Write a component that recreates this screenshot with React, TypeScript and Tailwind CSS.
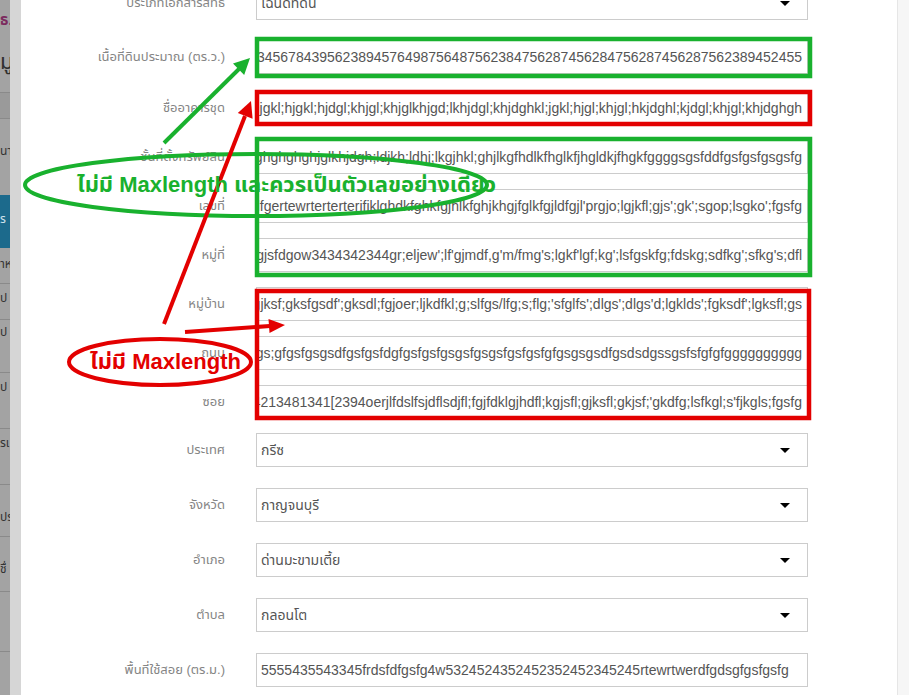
import React from "react";

type Row = {
  label: string;
  value: string;
  select?: boolean;
  overflow?: boolean;
  gap: string;
};

const rows: Row[] = [
  { label: "ประเภทเอกสารสิทธิ", value: "โฉนดที่ดิน", select: true, gap: "mt-0" },
  {
    label: "เนื้อที่ดินประมาณ (ตร.ว.)",
    value: "123456784395623894576498756487562384756287456284756287456287562389452455",
    overflow: true,
    gap: "mt-[20px]",
  },
  {
    label: "ชื่ออาคารชุด",
    value: "hjgkl;hjgkl;hjdgl;khjgl;khjglkhjgd;lkhjdgl;khjdghkl;jgkl;hjgl;khjgl;hkjdghl;kjdgl;khjgl;khjdghgh",
    overflow: true,
    gap: "mt-[17px]",
  },
  {
    label: "ชั้นที่ตั้งทรัพย์สิน",
    value: "ghghghghjglkhjdgh;ldjkh;ldhj;lkgjhkl;ghjlkgfhdlkfhglkfjhgldkjfhgkfggggsgsfddfgsfgsfgsgsfg",
    overflow: true,
    gap: "mt-[15px]",
  },
  {
    label: "เลขที่",
    value: "dfgertewrterterterifjklghdkfghkfgjhlkfghjkhgjfglkfgjldfgjl'prgjo;lgjkfl;gjs';gk';sgop;lsgko';fgsfg",
    overflow: true,
    gap: "mt-[15px]",
  },
  {
    label: "หมู่ที่",
    value: "sgjsfdgow3434342344gr;eljew';lf'gjmdf,g'm/fmg's;lgkf'lgf;kg';lsfgskfg;fdskg;sdfkg';sfkg's;dfl",
    overflow: true,
    gap: "mt-[15px]",
  },
  {
    label: "หมู่บ้าน",
    value: "gjksf;gksfgsdf';gksdl;fgjoer;ljkdfkl;g;slfgs/lfg;s;flg;'sfglfs';dlgs';dlgs'd;lgklds';fgksdf';lgksfl;gs",
    overflow: true,
    gap: "mt-[15px]",
  },
  {
    label: "ถนน",
    value: "gsfgsfgsfgs;gfgsfgsgsdfgsfgsfdgfgsfgsfgsgsfgsgsfgsfgsfgfgsgsgsdfgsdsdgssgsfsfgfgfgggggggggg",
    overflow: true,
    gap: "mt-[15px]",
  },
  {
    label: "ซอย",
    value: "4213481341[2394oerjlfdslfsjdflsdjfl;fgjfdklgjhdfl;kgjsfl;gjksfl;gkjsf;'gkdfg;lsfkgl;s'fjkgls;fgsfg",
    overflow: true,
    gap: "mt-[15px]",
  },
  { label: "ประเทศ", value: "กรีซ", select: true, gap: "mt-[14px]" },
  { label: "จังหวัด", value: "กาญจนบุรี", select: true, gap: "mt-[21px]" },
  { label: "อำเภอ", value: "ด่านมะขามเตี้ย", select: true, gap: "mt-[21px]" },
  { label: "ตำบล", value: "กลอนโต", select: true, gap: "mt-[21px]" },
  {
    label: "พื้นที่ใช้สอย (ตร.ม.)",
    value: "5555435543345frdsfdfgsfg4w5324524352452352452345245rtewrtwerdfgdsgfgsfgsfg",
    gap: "mt-[21px]",
  },
];

/* behind the modal: bits of the page that peek out on the left */
const backdrop = [
  { h: "h-[45px]", text: "ธ.", cls: "text-[#7b2a5e] font-bold text-[15px] pt-[12px]" },
  { h: "h-[48px]", text: "มู", cls: "text-[#2f2f2f] text-[22px] pt-[6px] border-b border-[#8a8a8a]" },
  { h: "h-[26px]", text: "", cls: "bg-[#9a9a9a] border-b border-[#8a8a8a]" },
  { h: "h-[76px]", text: "นา", cls: "text-[#333] text-[12px] pt-[26px]" },
  { h: "h-[53px]", text: "ร", cls: "bg-[#1c6a8c] text-[#cfe3ec] text-[12px] pt-[18px]" },
  { h: "h-[36px]", text: "าห", cls: "text-[#333] text-[12px] pt-[10px] border-b border-[#8a8a8a]" },
  { h: "h-[36px]", text: "ูป", cls: "text-[#333] text-[12px] pt-[8px] border-b border-[#8a8a8a]" },
  { h: "h-[53px]", text: "ป", cls: "text-[#333] text-[12px] pt-[6px] border-b border-[#8a8a8a]" },
  { h: "h-[56px]", text: "ป", cls: "text-[#333] text-[12px] pt-[8px] border-b border-[#8a8a8a]" },
  { h: "h-[56px]", text: "รเ", cls: "text-[#333] text-[12px] pt-[8px] border-b border-[#8a8a8a]" },
  { h: "h-[52px]", text: "ประ", cls: "text-[#333] text-[12px] pt-[26px] border-b border-[#8a8a8a]" },
  { h: "h-[55px]", text: "ชื่", cls: "text-[#333] text-[12px] pt-[26px] border-b border-[#8a8a8a]" },
  { h: "h-[60px]", text: "", cls: "border-b border-[#8a8a8a]" },
  { h: "h-[60px]", text: "", cls: "" },
];

function Field({ row }: { row: Row }) {
  return (
    <div className={`flex items-center ${row.gap}`}>
      <div className="w-[204px] shrink-0 text-right text-[13px] text-[#858585]">{row.label}</div>
      <div className="relative ml-[31px] flex h-[34px] w-[552px] shrink-0 items-center overflow-hidden border border-[#cccccc] bg-white text-[14px] text-[#555]">
        {row.overflow ? (
          <div className="flex w-full justify-end pr-[5px]">
            <span className="whitespace-nowrap">{row.value}</span>
          </div>
        ) : (
          <span className="whitespace-nowrap pl-[4px]">{row.value}</span>
        )}
        {row.select && (
          <span className="absolute right-[17px] top-[14px] h-0 w-0 border-x-[5px] border-t-[5px] border-x-transparent border-t-black" />
        )}
      </div>
    </div>
  );
}

function Annotations() {
  const green = "#19b12e";
  const red = "#e30000";
  return (
    <>
      <svg className="pointer-events-none absolute left-0 top-0" width={909} height={695}>
        {/* green boxes */}
        <rect x={257} y={39} width={553} height={37} fill="none" stroke={green} strokeWidth={4.5} />
        <rect x={257} y={139} width={553} height={136} fill="none" stroke={green} strokeWidth={4.5} />
        {/* red boxes */}
        <rect x={257} y={92} width={553} height={32} fill="none" stroke={red} strokeWidth={4.5} />
        <rect x={257} y={291} width={552} height={127} fill="none" stroke={red} strokeWidth={4.5} />

        {/* green ellipse + arrow */}
        <ellipse cx={256} cy={185} rx={231} ry={31} fill="none" stroke={green} strokeWidth={4} />
        <line x1={164} y1={143} x2={239} y2={69} stroke={green} strokeWidth={4} />
        <polygon points="250,58 244.2,74.9 233,63.5" fill={green} />

        {/* red ellipse + arrows */}
        <ellipse cx={160} cy={362} rx={91} ry={23} fill="none" stroke={red} strokeWidth={4} />
        <line x1={164} y1={324} x2={245} y2={116} stroke={red} strokeWidth={4} />
        <polygon points="251,101 252.6,118.8 237.8,113" fill={red} />
        <line x1={185} y1={332} x2={270} y2={326} stroke={red} strokeWidth={4} />
        <polygon points="285,325 269.5,333.1 268.5,319.1" fill={red} />
      </svg>
      <div className="pointer-events-none absolute left-[77px] top-[170px] whitespace-nowrap text-[22px] font-bold leading-[30px] text-[#19b12e]">
        ไม่มี Maxlength และควรเป็นตัวเลขอย่างเดียว
      </div>
      <div className="pointer-events-none absolute left-[90px] top-[347px] whitespace-nowrap text-[22px] font-bold leading-[30px] text-[#e30000]">
        ไม่มี Maxlength
      </div>
    </>
  );
}

export default function App() {
  return (
    <div
      className="relative flex h-[695px] w-[909px] overflow-hidden bg-white"
      style={{ fontFamily: '"Liberation Sans", Tahoma, "Noto Sans Thai", "Noto Sans", sans-serif' }}
    >
      {/* page behind the dialog */}
      <div className="flex w-[10px] shrink-0 flex-col overflow-hidden bg-[#a3a3a3] leading-none">
        {backdrop.map((b, i) => (
          <div key={i} className={`${b.h} shrink-0 overflow-hidden whitespace-nowrap ${b.cls}`}>
            {b.text}
          </div>
        ))}
      </div>
      <div className="w-[11px] shrink-0 bg-[#d6d6d6]" />

      {/* dialog body */}
      <div className="flex-1 overflow-hidden">
        <div className="-mt-[14px] flex flex-col">
          {rows.map((r) => (
            <Field key={r.label} row={r} />
          ))}
        </div>
      </div>

      {/* dialog scroll track */}
      <div className="w-[12px] shrink-0 border-l border-[#e6e6e6] bg-[#f6f6f6]" />

      <Annotations />
    </div>
  );
}
